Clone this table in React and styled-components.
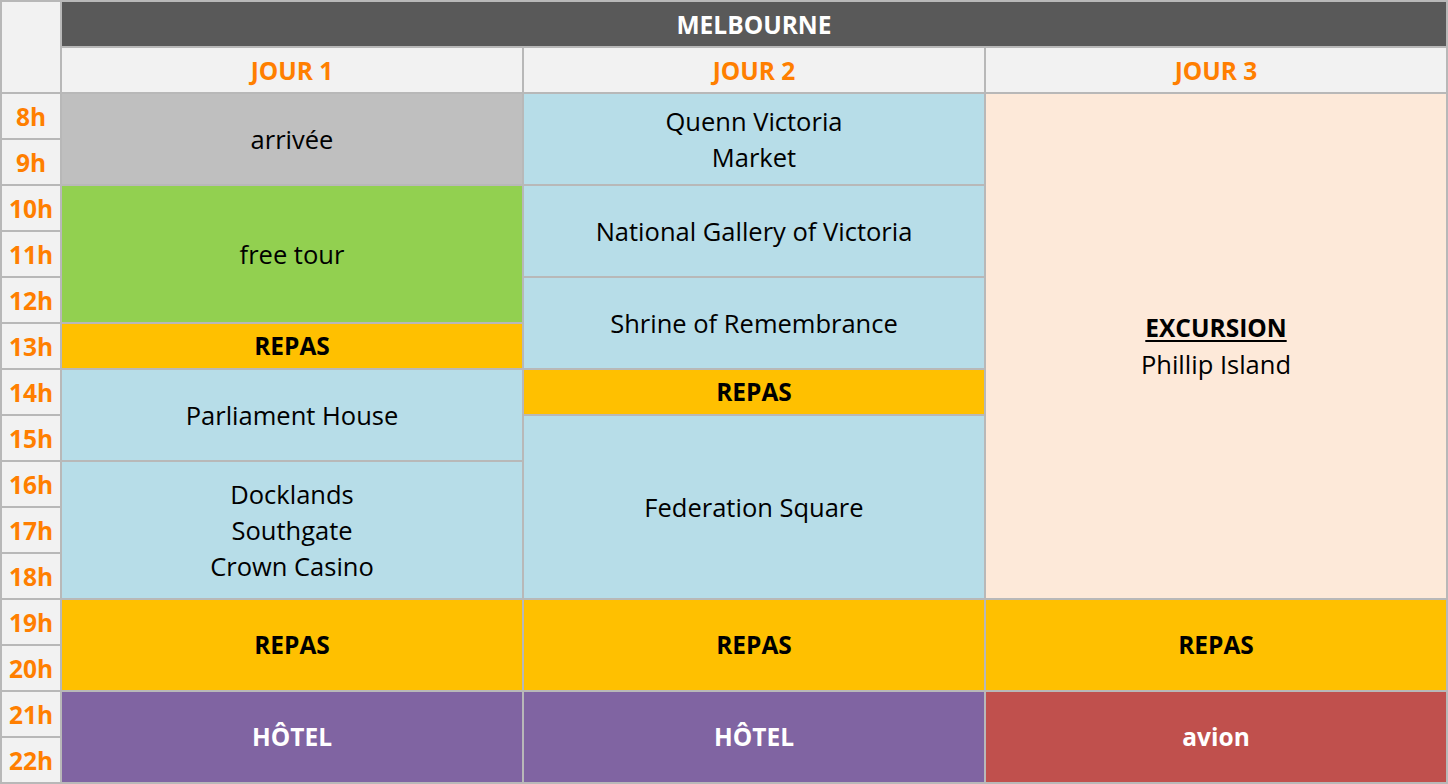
import styled, { createGlobalStyle } from 'styled-components'

const GlobalStyle = createGlobalStyle`
  html, body {
    margin: 0;
    padding: 0;
    background: #ffffff;
  }
  body {
    font-family: 'Open Sans', 'Noto Sans', sans-serif;
  }
`

const COLORS = {
  gray: '#bfbfbf',
  blue: '#b7dde8',
  green: '#92d050',
  gold: '#ffc000',
  peach: '#fde9d9',
  purple: '#8064a2',
  red: '#c0504d',
}

const Grid = styled.div`
  display: grid;
  grid-template-columns: 58px repeat(3, 460px);
  grid-template-rows: repeat(17, 44px);
  gap: 2px;
  padding: 2px;
  width: 1448px;
  height: 784px;
  box-sizing: border-box;
  background: #b8b8b8;
`

const Corner = styled.div`
  grid-column: 1;
  grid-row: 1 / span 2;
  background: #f2f2f2;
`

const CityHeader = styled.div`
  grid-column: 2 / span 3;
  grid-row: 1;
  background: #595959;
  color: #ffffff;
  font-weight: 700;
  font-size: 24.5px;
  display: flex;
  align-items: center;
  justify-content: center;
`

const DayHeader = styled.div`
  grid-row: 2;
  grid-column: ${(p) => p.$col};
  background: #f2f2f2;
  color: #ff7f00;
  font-weight: 700;
  font-size: 24.5px;
  display: flex;
  align-items: center;
  justify-content: center;
`

const Hour = styled.div`
  grid-column: 1;
  grid-row: ${(p) => p.$row};
  background: #f2f2f2;
  color: #ff7f00;
  font-weight: 700;
  font-size: 24.5px;
  display: flex;
  align-items: center;
  justify-content: center;
`

const Slot = styled.div`
  grid-column: ${(p) => p.$col};
  grid-row: ${(p) => p.$row} / span ${(p) => p.$span};
  background: ${(p) => COLORS[p.$tone]};
  color: ${(p) => (p.$light ? '#ffffff' : '#000000')};
  font-weight: ${(p) => (p.$bold ? 700 : 400)};
  font-size: ${(p) => (p.$bold ? '24.5px' : '25.5px')};
  line-height: 36px;
  display: flex;
  flex-direction: column;
  align-items: center;
  justify-content: center;
  text-align: center;
`

const Underlined = styled.span`
  font-weight: 700;
  font-size: 24.5px;
  text-decoration: underline;
  text-underline-offset: 3px;
`

const hours = ['8h', '9h', '10h', '11h', '12h', '13h', '14h', '15h', '16h', '17h', '18h', '19h', '20h', '21h', '22h']

// row 3 = 8h
const r = (h) => h - 5

export default function App() {
  return (
    <>
      <GlobalStyle />
      <Grid>
        <Corner />
        <CityHeader>MELBOURNE</CityHeader>
        <DayHeader $col={2}>JOUR 1</DayHeader>
        <DayHeader $col={3}>JOUR 2</DayHeader>
        <DayHeader $col={4}>JOUR 3</DayHeader>

        {hours.map((h, i) => (
          <Hour key={h} $row={i + 3}>{h}</Hour>
        ))}

        {/* jour 1 */}
        <Slot $col={2} $row={r(8)} $span={2} $tone='gray'>arrivée</Slot>
        <Slot $col={2} $row={r(10)} $span={3} $tone='green'>free tour</Slot>
        <Slot $col={2} $row={r(13)} $span={1} $tone='gold' $bold>REPAS</Slot>
        <Slot $col={2} $row={r(14)} $span={2} $tone='blue'>Parliament House</Slot>
        <Slot $col={2} $row={r(16)} $span={3} $tone='blue'>
          <span>Docklands</span>
          <span>Southgate</span>
          <span>Crown Casino</span>
        </Slot>
        <Slot $col={2} $row={r(19)} $span={2} $tone='gold' $bold>REPAS</Slot>
        <Slot $col={2} $row={r(21)} $span={2} $tone='purple' $bold $light>HÔTEL</Slot>

        {/* jour 2 */}
        <Slot $col={3} $row={r(8)} $span={2} $tone='blue'>
          <span>Quenn Victoria</span>
          <span>Market</span>
        </Slot>
        <Slot $col={3} $row={r(10)} $span={2} $tone='blue'>National Gallery of Victoria</Slot>
        <Slot $col={3} $row={r(12)} $span={2} $tone='blue'>Shrine of Remembrance</Slot>
        <Slot $col={3} $row={r(14)} $span={1} $tone='gold' $bold>REPAS</Slot>
        <Slot $col={3} $row={r(15)} $span={4} $tone='blue'>Federation Square</Slot>
        <Slot $col={3} $row={r(19)} $span={2} $tone='gold' $bold>REPAS</Slot>
        <Slot $col={3} $row={r(21)} $span={2} $tone='purple' $bold $light>HÔTEL</Slot>

        {/* jour 3 */}
        <Slot $col={4} $row={r(8)} $span={11} $tone='peach'>
          <Underlined>EXCURSION</Underlined>
          <span>Phillip Island</span>
        </Slot>
        <Slot $col={4} $row={r(19)} $span={2} $tone='gold' $bold>REPAS</Slot>
        <Slot $col={4} $row={r(21)} $span={2} $tone='red' $bold $light>avion</Slot>
      </Grid>
    </>
  )
}
